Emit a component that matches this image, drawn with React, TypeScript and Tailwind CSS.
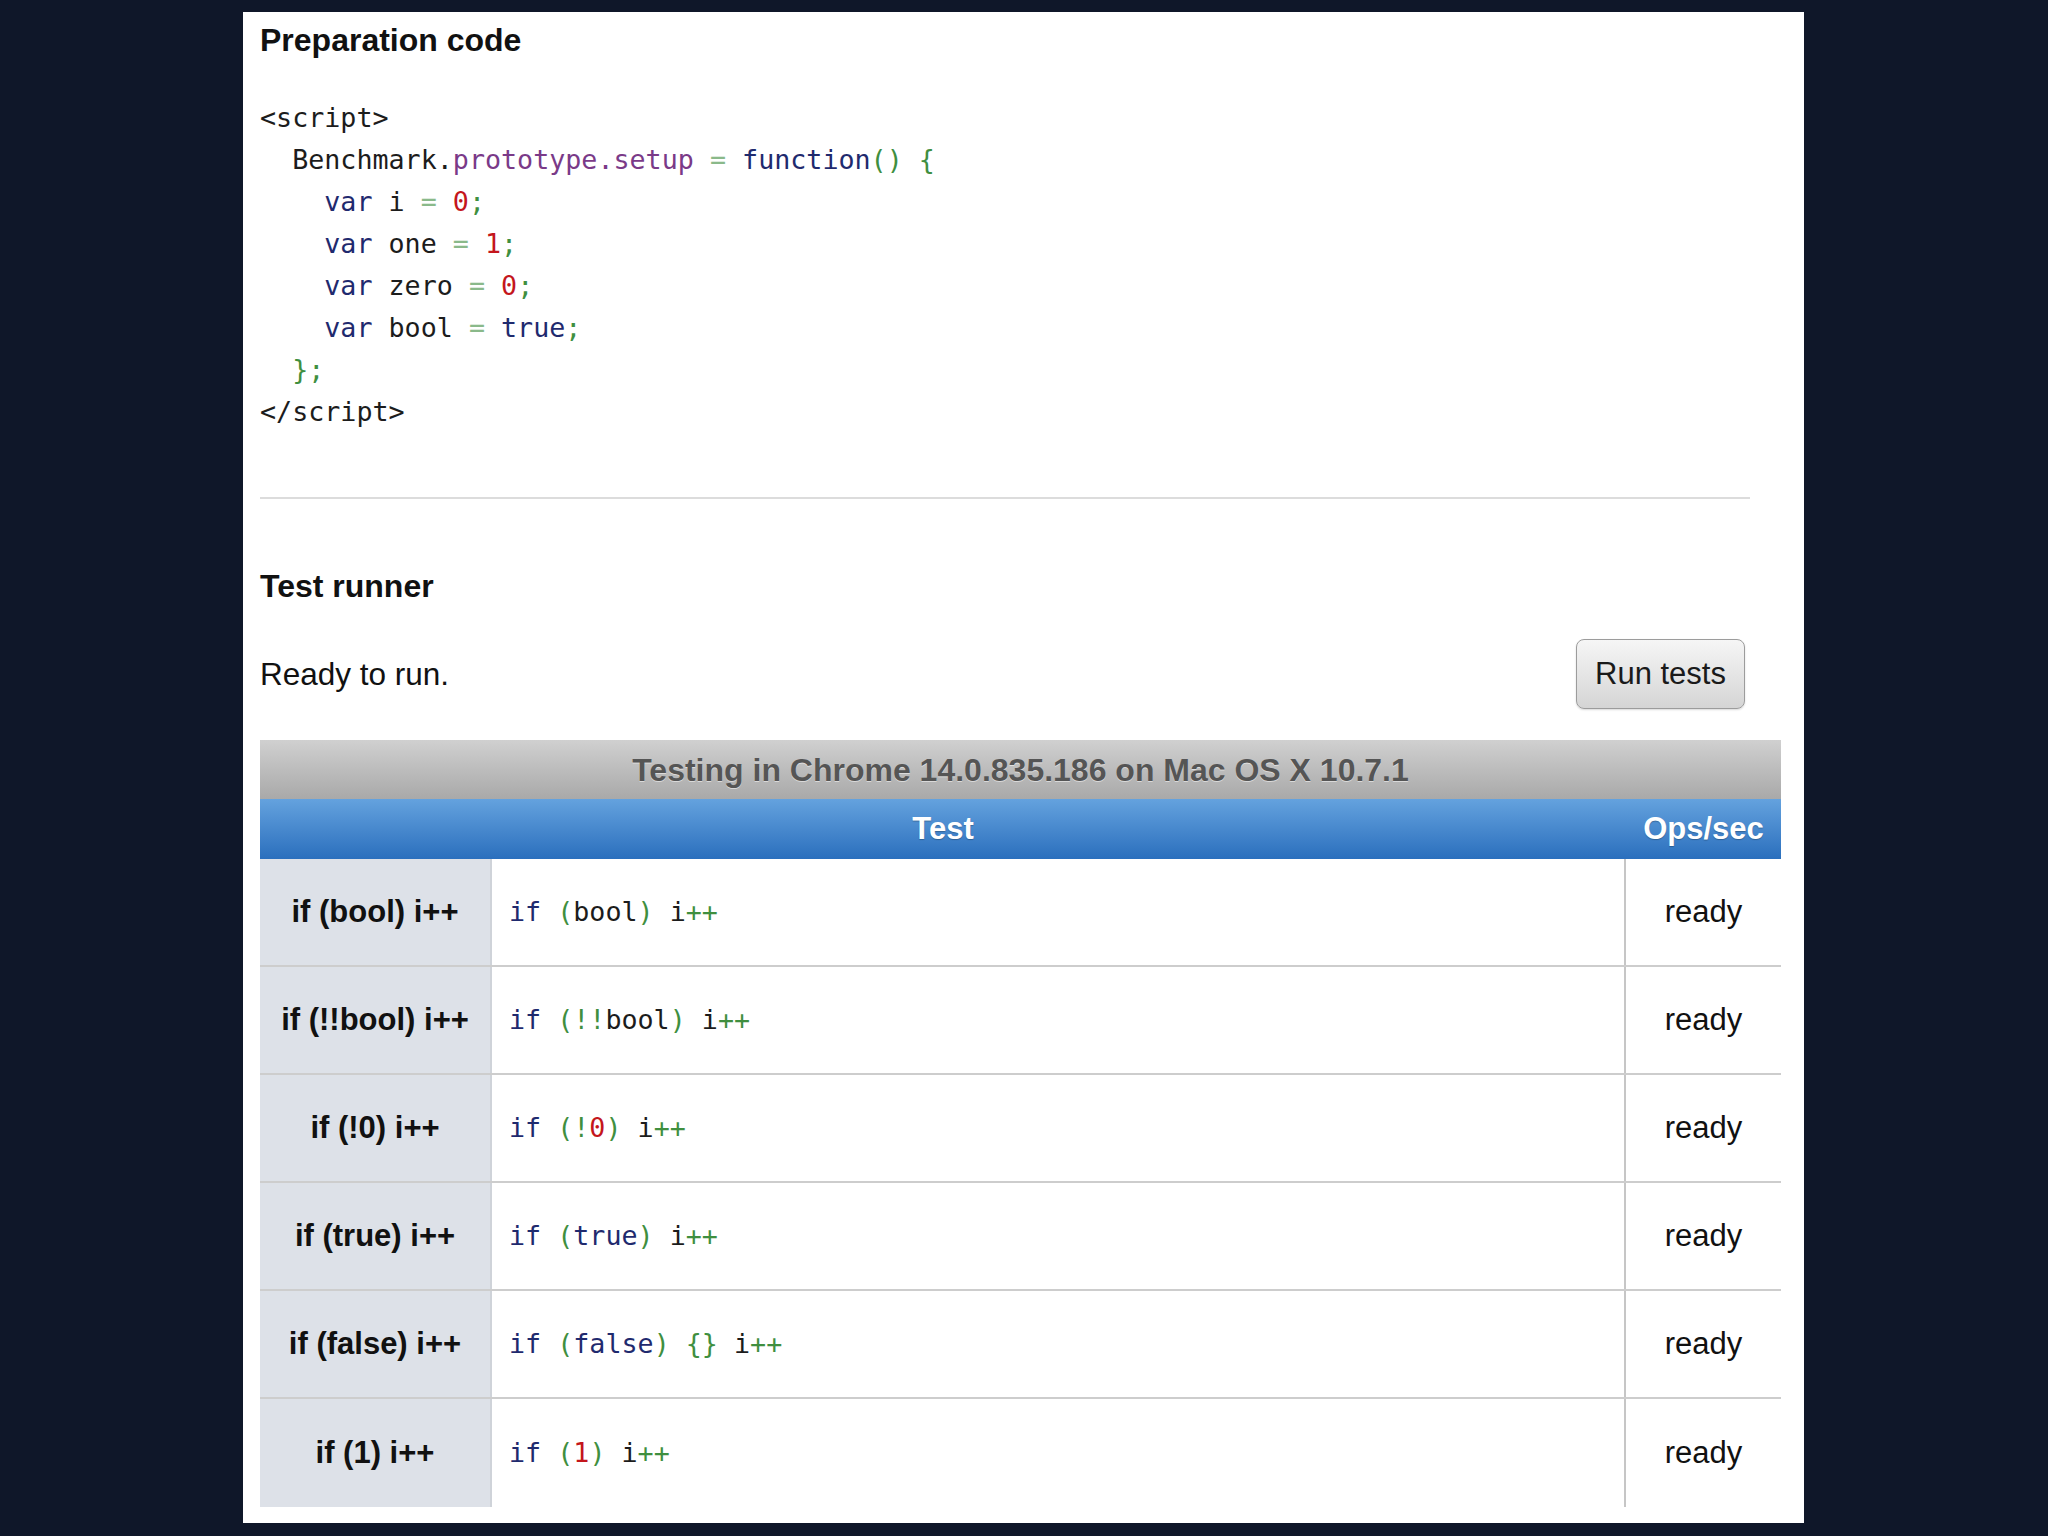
const tone = {
  p: "text-[#1c1c1c]",
  k: "text-[#1f2a6e]",
  t: "text-[#7a3a88]",
  g: "text-[#3f8f3f]",
  e: "text-[#8ab98a]",
  n: "text-[#c4161c]",
};

type Tok = [keyof typeof tone, string];

const Code = ({ toks }: { toks: Tok[] }) => (
  <>
    {toks.map(([k, s], i) => (
      <span key={i} className={tone[k]}>
        {s}
      </span>
    ))}
  </>
);

const prep: Tok[][] = [
  [["p", "<script>"]],
  [["p", "  Benchmark."], ["t", "prototype.setup"], ["p", " "], ["e", "="], ["p", " "], ["k", "function"], ["g", "()"], ["p", " "], ["g", "{"]],
  [["p", "    "], ["k", "var"], ["p", " i "], ["e", "="], ["p", " "], ["n", "0"], ["g", ";"]],
  [["p", "    "], ["k", "var"], ["p", " one "], ["e", "="], ["p", " "], ["n", "1"], ["g", ";"]],
  [["p", "    "], ["k", "var"], ["p", " zero "], ["e", "="], ["p", " "], ["n", "0"], ["g", ";"]],
  [["p", "    "], ["k", "var"], ["p", " bool "], ["e", "="], ["p", " "], ["k", "true"], ["g", ";"]],
  [["p", "  "], ["g", "};"]],
  [["p", "</script>"]],
];

const rows: { name: string; code: Tok[] }[] = [
  { name: "if (bool) i++", code: [["k", "if"], ["p", " "], ["g", "("], ["p", "bool"], ["g", ")"], ["p", " i"], ["g", "++"]] },
  { name: "if (!!bool) i++", code: [["k", "if"], ["p", " "], ["g", "(!!"], ["p", "bool"], ["g", ")"], ["p", " i"], ["g", "++"]] },
  { name: "if (!0) i++", code: [["k", "if"], ["p", " "], ["g", "(!"], ["n", "0"], ["g", ")"], ["p", " i"], ["g", "++"]] },
  { name: "if (true) i++", code: [["k", "if"], ["p", " "], ["g", "("], ["k", "true"], ["g", ")"], ["p", " i"], ["g", "++"]] },
  { name: "if (false) i++", code: [["k", "if"], ["p", " "], ["g", "("], ["k", "false"], ["g", ")"], ["p", " "], ["g", "{}"], ["p", " i"], ["g", "++"]] },
  { name: "if (1) i++", code: [["k", "if"], ["p", " "], ["g", "("], ["n", "1"], ["g", ")"], ["p", " i"], ["g", "++"]] },
];

const mono = "font-['DejaVu_Sans_Mono','Liberation_Mono',monospace] text-[26.7px]";

export default function App() {
  return (
    <div className="min-h-screen bg-[#0f1729] pt-[12px] pl-[243px] font-['Liberation_Sans',Arial,sans-serif] text-[#111]">
      <div className="w-[1561px] bg-white pl-[17px] pr-[23px] pt-[10px] pb-[16px]">
        <h2 className="text-[32px] leading-[36px] font-bold">Preparation code</h2>

        <pre className={`${mono} mt-[39px] leading-[42px]`}>
          {prep.map((line, i) => (
            <div key={i}>
              <Code toks={line} />
            </div>
          ))}
        </pre>

        <div className="mt-[64px] h-[2px] w-[1490px] bg-[#dcdcdc]" />

        <h2 className="mt-[69px] text-[32px] leading-[36px] font-bold">Test runner</h2>

        <div className="mt-[35px] flex items-center justify-between pr-[36px]">
          <p className="text-[31.5px] leading-[36px]">Ready to run.</p>
          <button className="h-[70px] w-[169px] rounded-[8px] border border-[#9c9c9c] bg-gradient-to-b from-[#f6f6f6] to-[#d5d5d5] text-[31px] text-[#1a1a1a] shadow-[0_1px_2px_rgba(0,0,0,0.15)]">
            Run tests
          </button>
        </div>

        <div className="mt-[31px] w-[1521px]">
          <div className="flex h-[59px] items-center justify-center bg-gradient-to-b from-[#d0d0d0] to-[#a9a9a9] text-[32px] font-bold text-[#555] [text-shadow:0_1px_0_rgba(255,255,255,0.5)]">
            Testing in Chrome 14.0.835.186 on Mac OS X 10.7.1
          </div>
          <div className="grid h-[60px] grid-cols-[1366px_155px] items-center bg-gradient-to-b from-[#64a2de] to-[#2a6fbd] text-[31px] font-bold text-white [text-shadow:0_1px_1px_rgba(0,0,0,0.25)]">
            <div className="text-center">Test</div>
            <div className="text-center whitespace-nowrap">Ops/sec</div>
          </div>
          {rows.map((r, i) => (
            <div
              key={r.name}
              className={`grid h-[108px] grid-cols-[232px_1134px_155px] ${i < rows.length - 1 ? "border-b-2 border-[#cdcdcd]" : ""}`}
            >
              <div className="flex items-center justify-center border-r-2 border-[#cfd3d9] bg-[#dde1e8] text-[31px] font-bold whitespace-nowrap">
                {r.name}
              </div>
              <div className={`${mono} flex items-center border-r-2 border-[#c6c6c6] pl-[17px] whitespace-pre`}>
                <Code toks={r.code} />
              </div>
              <div className="flex items-center justify-center text-[31px]">ready</div>
            </div>
          ))}
        </div>
      </div>
    </div>
  );
}
